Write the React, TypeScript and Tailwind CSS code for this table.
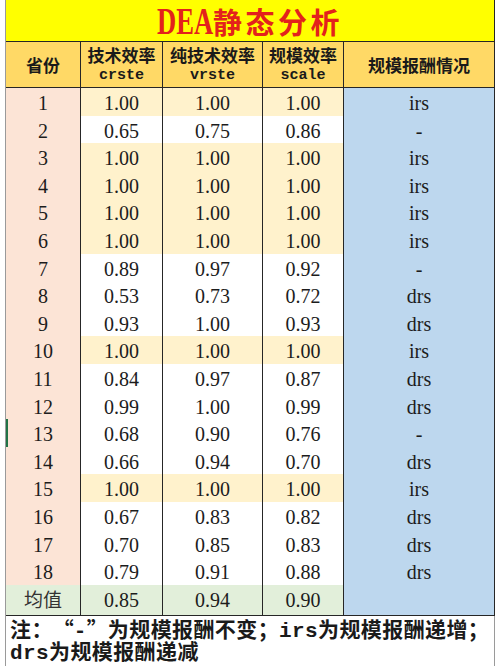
import React from "react";

interface IRow {
	id: string;
	crste: string;
	vrste: string;
	scale: string;
	rts: string;
}

const rows: IRow[] = [
	{ id: "1", crste: "1.00", vrste: "1.00", scale: "1.00", rts: "irs" },
	{ id: "2", crste: "0.65", vrste: "0.75", scale: "0.86", rts: "-" },
	{ id: "3", crste: "1.00", vrste: "1.00", scale: "1.00", rts: "irs" },
	{ id: "4", crste: "1.00", vrste: "1.00", scale: "1.00", rts: "irs" },
	{ id: "5", crste: "1.00", vrste: "1.00", scale: "1.00", rts: "irs" },
	{ id: "6", crste: "1.00", vrste: "1.00", scale: "1.00", rts: "irs" },
	{ id: "7", crste: "0.89", vrste: "0.97", scale: "0.92", rts: "-" },
	{ id: "8", crste: "0.53", vrste: "0.73", scale: "0.72", rts: "drs" },
	{ id: "9", crste: "0.93", vrste: "1.00", scale: "0.93", rts: "drs" },
	{ id: "10", crste: "1.00", vrste: "1.00", scale: "1.00", rts: "irs" },
	{ id: "11", crste: "0.84", vrste: "0.97", scale: "0.87", rts: "drs" },
	{ id: "12", crste: "0.99", vrste: "1.00", scale: "0.99", rts: "drs" },
	{ id: "13", crste: "0.68", vrste: "0.90", scale: "0.76", rts: "-" },
	{ id: "14", crste: "0.66", vrste: "0.94", scale: "0.70", rts: "drs" },
	{ id: "15", crste: "1.00", vrste: "1.00", scale: "1.00", rts: "irs" },
	{ id: "16", crste: "0.67", vrste: "0.83", scale: "0.82", rts: "drs" },
	{ id: "17", crste: "0.70", vrste: "0.85", scale: "0.83", rts: "drs" },
	{ id: "18", crste: "0.79", vrste: "0.91", scale: "0.88", rts: "drs" },
];

const grid = "grid grid-cols-[75px_82px_100px_81px_151px]";
const cell = "flex items-center justify-center border-r border-b border-[#262626]";
const serif = "font-['Liberation_Serif','Noto_Sans_CJK_SC',serif] text-[20px] text-[#1c1c1c]";
const cjk = "font-['Noto_Sans_CJK_SC',sans-serif]";
const mono = "font-['Liberation_Mono','Noto_Sans_CJK_SC',monospace]";

const HeaderCell = ({ top, bottom }: { top: string; bottom?: string }) => (
	<div className={`${cell} bg-[#ffd966] flex-col leading-[21px] text-[#1a1a1a]`}>
		<span className={`${cjk} font-bold text-[17px]`}>{top}</span>
		{bottom && <span className={`${mono} font-bold text-[15px]`}>{bottom}</span>}
	</div>
);

const App = () => {
	return (
		<div className="w-[500px] h-[666px] bg-white overflow-hidden">
			<div className="ml-[5px] w-[490px] border-l border-[#9a9a9a]">
				{/* title */}
				<div className="h-[42px] bg-[#ffff00] border-r border-b border-[#262626] flex items-start justify-center text-[#e3221c] font-bold">
					<span className="inline-block origin-left scale-x-[0.7] mr-[-24px] font-['Liberation_Serif',serif] text-[38px] leading-[42px]">DEA</span>
					<span className={`${cjk} text-[29px] leading-[42px] tracking-[3.5px]`}>静态分析</span>
				</div>

				{/* header */}
				<div className={`${grid} h-[46px]`}>
					<HeaderCell top="省份" />
					<HeaderCell top="技术效率" bottom="crste" />
					<HeaderCell top="纯技术效率" bottom="vrste" />
					<HeaderCell top="规模效率" bottom="scale" />
					<HeaderCell top="规模报酬情况" />
				</div>

				{/* rows */}
				{rows.map(({ id, crste, vrste, scale, rts }) => {
					const full = crste === "1.00" && vrste === "1.00" && scale === "1.00";
					const bg = full ? "bg-[#fff2cc]" : "bg-white";
					return (
						<div className={`${grid} h-[27.6px] ${serif}`} key={id}>
							<div className={`${cell} bg-[#fce4d6] ${id === "13" ? "shadow-[inset_2px_0_0_#217346]" : ""}`}>{id}</div>
							<div className={`${cell} ${bg}`}>{crste}</div>
							<div className={`${cell} ${bg}`}>{vrste}</div>
							<div className={`${cell} ${bg}`}>{scale}</div>
							<div className={`${cell} bg-[#bdd7ee]`}>{rts}</div>
						</div>
					);
				})}

				{/* mean */}
				<div className={`${grid} h-[28px] ${serif}`}>
					<div className={`${cell} bg-[#e2efda] ${cjk} text-[19px] text-[#333]`}>均值</div>
					<div className={`${cell} bg-[#e2efda]`}>0.85</div>
					<div className={`${cell} bg-[#e2efda]`}>0.94</div>
					<div className={`${cell} bg-[#e2efda]`}>0.90</div>
					<div className={`${cell} bg-[#bdd7ee]`}></div>
				</div>

				{/* note */}
				<div className={`h-[53px] border-r border-[#9a9a9a] pt-[4px] pl-[4px] ${mono} font-bold text-[21px] leading-[22px] tracking-[0.4px] text-[#1a1a1a] whitespace-nowrap`}>
					<div>
						注：<span className={`${cjk} inline-block w-[21px] text-right`}>“</span>-<span className={`${cjk} inline-block w-[21px] text-left`}>”</span>为规模报酬不变；irs为规模报酬递增；
					</div>
					<div>drs为规模报酬递减</div>
				</div>
			</div>
		</div>
	);
};

export default App;
